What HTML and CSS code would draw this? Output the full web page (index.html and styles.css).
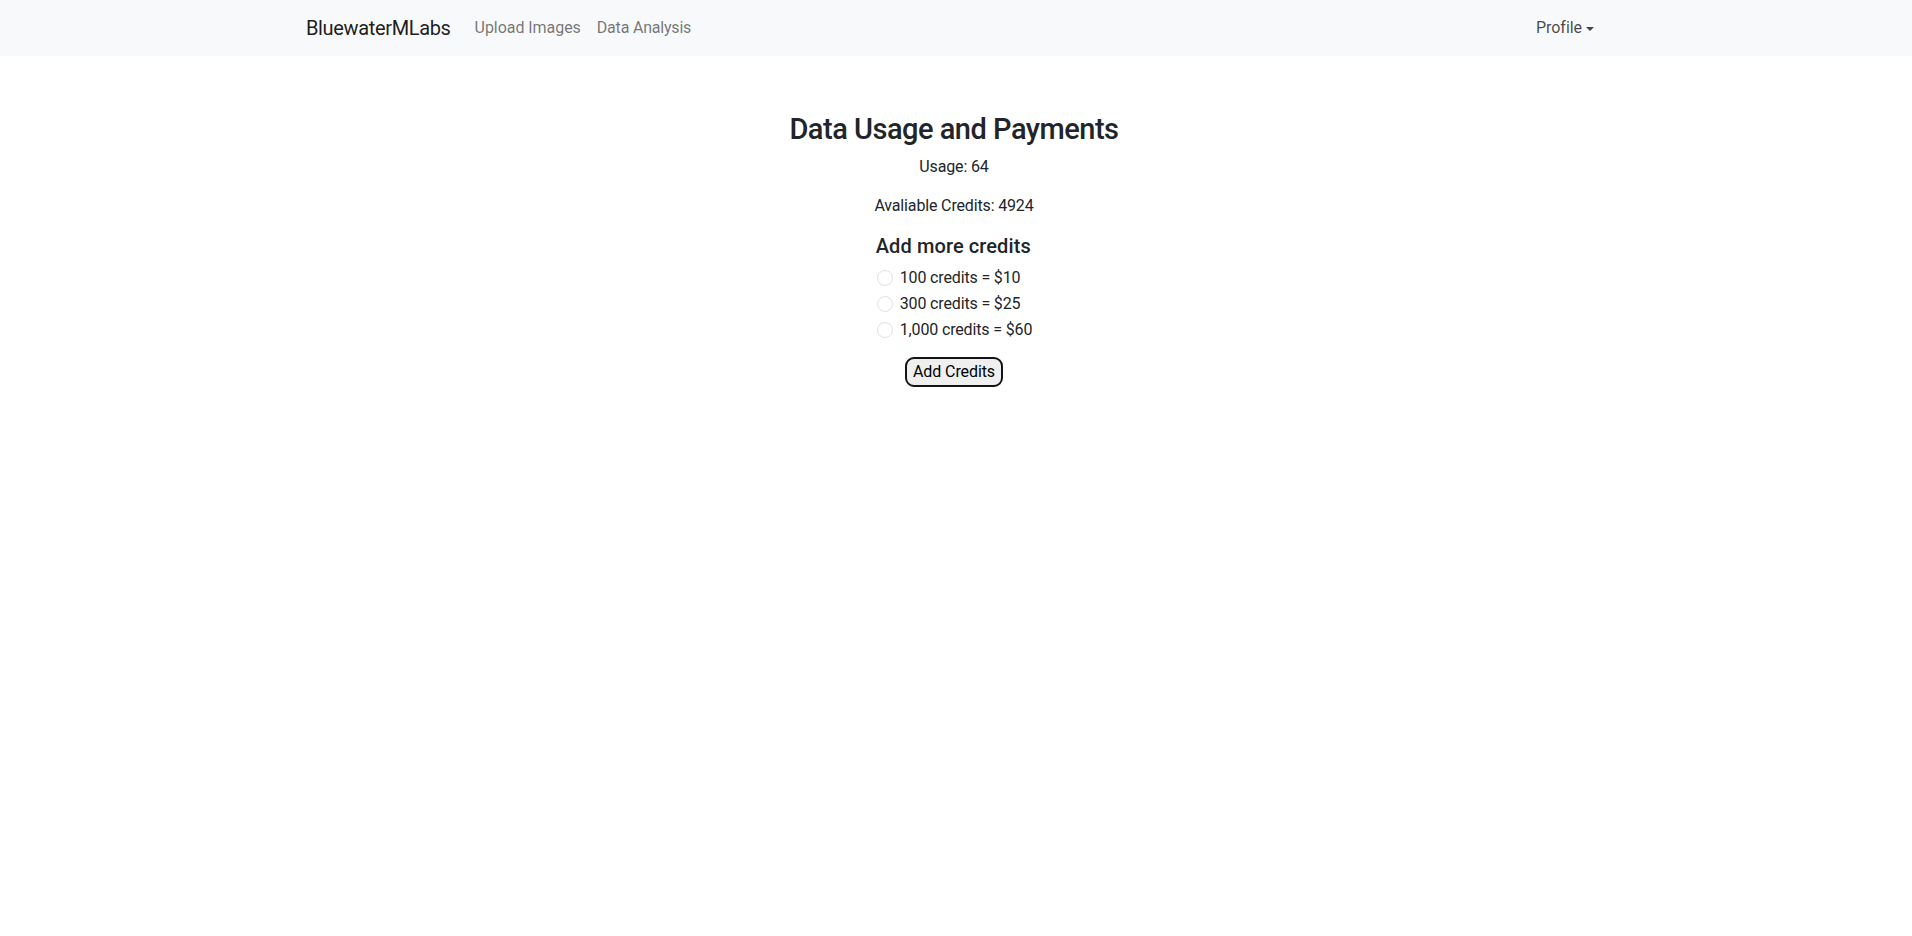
FILE: index.html
```html
<!DOCTYPE html>
<html lang="en">
<head>
<meta charset="utf-8">
<title>Data Usage and Payments</title>
<link rel="stylesheet" href="styles.css">
</head>
<body>
<nav class="navbar">
  <div class="nav-container">
    <div class="nav-left">
      <a class="brand" href="#">BluewaterMLabs</a>
      <a class="nav-link" href="#">Upload Images</a>
      <a class="nav-link nav-link-tight" href="#">Data Analysis</a>
    </div>
    <a class="nav-link profile" href="#">Profile<span class="caret"></span></a>
  </div>
</nav>
<main class="main">
  <h2 class="title">Data Usage and Payments</h2>
  <p class="info">Usage: 64</p>
  <p class="info">Avaliable Credits: 4924</p>
  <form class="credit-form">
    <div class="credit-block">
      <h5 class="subtitle">Add more credits</h5>
      <label class="check"><input type="radio" name="credits" class="radio"><span>100 credits = $10</span></label>
      <label class="check"><input type="radio" name="credits" class="radio"><span>300 credits = $25</span></label>
      <label class="check"><input type="radio" name="credits" class="radio"><span>1,000 credits = $60</span></label>
    </div>
    <div class="btn-row"><button type="button" class="btn">Add Credits</button></div>
  </form>
</main>
</body>
</html>
```
FILE: styles.css
```css
* { box-sizing: border-box; }
html, body { margin: 0; padding: 0; }
body {
  font-family: Roboto, "Liberation Sans", sans-serif;
  font-size: 16px;
  line-height: 1.5;
  color: #212529;
  background: #ffffff;
}
a { text-decoration: none; }

.navbar {
  background: #f8f9fa;
  padding: 8px 0;
  height: 56px;
}
.nav-container {
  width: 1320px;
  margin-left: calc(50% - 662px);
  padding: 0 12px;
  display: flex;
  align-items: center;
  justify-content: space-between;
}
.nav-left { display: flex; align-items: center; }
.brand {
  font-size: 20px;
  line-height: 30px;
  padding: 5px 0;
  margin-right: 16px;
  color: rgba(0, 0, 0, 0.9);
  letter-spacing: -0.35px;
}
.nav-link {
  display: block;
  padding: 8px;
  line-height: 24px;
  color: rgba(0, 0, 0, 0.55);
  letter-spacing: -0.05px;
}
.nav-link-tight { letter-spacing: -0.2px; }
.profile {
  color: rgba(0, 0, 0, 0.72);
  display: flex;
  align-items: center;
}
.caret {
  display: inline-block;
  margin-left: 4px;
  width: 0;
  height: 0;
  border-top: 4.8px solid currentColor;
  border-left: 4.8px solid transparent;
  border-right: 4.8px solid transparent;
  margin-top: 1px;
}

.main {
  width: calc(100% - 4px);
  padding-top: 56px;
  text-align: center;
}
.title {
  margin: 0 0 8px;
  font-size: 29px;
  font-weight: 500;
  line-height: 1.2;
  letter-spacing: -0.5px;
}
.info {
  margin: 0 0 15px;
  letter-spacing: -0.15px;
}
.credit-form { margin: 0; }
.credit-block {
  display: inline-block;
  text-align: left;
  margin-top: 1px;
  vertical-align: top;
}
.subtitle {
  margin: 0 0 8px;
  font-size: 20px;
  font-weight: 500;
  line-height: 1.2;
  letter-spacing: 0.1px;
}
.check {
  display: flex;
  align-items: flex-start;
  min-height: 24px;
  margin-bottom: 2px;
  letter-spacing: -0.15px;
}
.radio {
  appearance: none;
  -webkit-appearance: none;
  width: 16px;
  height: 16px;
  margin: 4px 7px 0 1px;
  border: 1px solid #dee2e6;
  border-radius: 50%;
  background: #fff;
  flex: 0 0 auto;
}
.btn-row {
  display: flex;
  justify-content: center;
  margin-top: 13px;
}
.btn {
  font-family: Roboto, "Liberation Sans", sans-serif;
  font-size: 16px;
  line-height: 22px;
  color: #000;
  background: #efefef;
  border: 2px solid #141414;
  border-radius: 9px;
  padding: 2px 6px;
  height: 30px;
  letter-spacing: -0.1px;
}
```
